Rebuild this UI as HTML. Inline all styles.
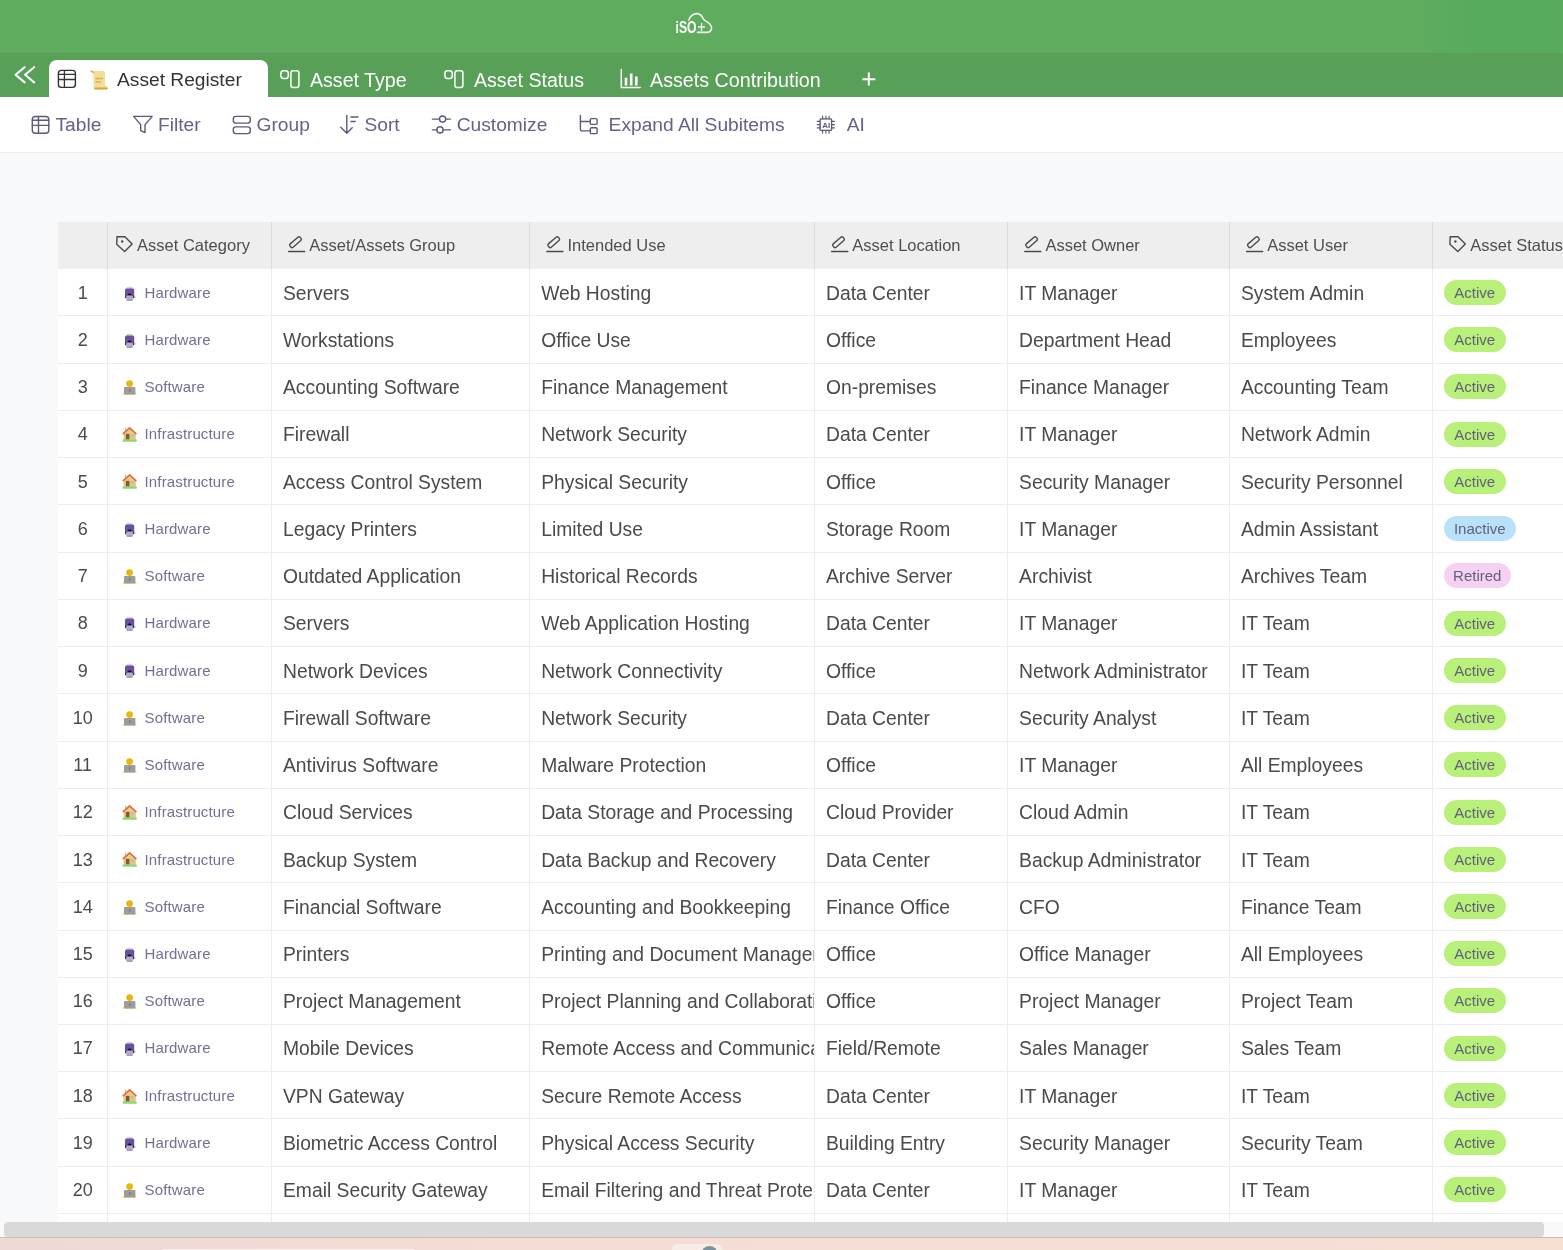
<!DOCTYPE html>
<html><head><meta charset="utf-8"><title>Asset Register</title>
<style>
*{box-sizing:border-box;margin:0;padding:0}
html,body{width:1563px;height:1250px;overflow:hidden;background:#f8f9fb;font-family:"Liberation Sans",sans-serif}
.a{position:absolute}
.t{position:absolute;white-space:nowrap}
svg{position:absolute;overflow:visible}
</style></head><body>
<div id="w" style="position:absolute;left:0;top:0;width:1563px;height:1250px;filter:blur(0.45px)">

<div class="a" style="left:0;top:0;width:1563px;height:53px;background:#5fac5f"></div>
<div class="a" style="left:1420px;top:0;width:143px;height:52px;background:linear-gradient(90deg,rgba(80,170,90,0) 0%,rgba(80,170,90,.55) 40%,rgba(80,170,90,.45) 100%)"></div>
<svg style="left:0;top:0" width="1563" height="53">
<text x="675.5" y="33" font-family="Liberation Sans" font-weight="bold" font-size="17" fill="#fff" textLength="21" lengthAdjust="spacingAndGlyphs">iSO</text>
<path d="M688.8 20 C690.5 15.5 693.5 13.6 697.2 13.6 C700.5 13.6 702.3 16.5 703.8 19.6 C705 21 707 21.5 708.5 22.8 C711 24.8 712 27 711.4 29.3 C710.8 31.3 709.2 32.4 707.2 32.4 L697.5 32.4" fill="none" stroke="#fff" stroke-width="1.6" opacity=".88" stroke-linecap="round"/>
<path d="M698 27 H705 M701.5 23 V31" stroke="#fff" stroke-width="1.3" opacity=".9"/>
</svg>
<div class="a" style="left:0;top:53px;width:1563px;height:44px;background:#58a058"></div>
<div class="a" style="left:49px;top:60.2px;width:219px;height:37px;background:#fff;border-radius:8px 8px 0 0"></div>
<svg style="left:0;top:0" width="60" height="97"><path d="M24.6 67.2 L15.6 74.8 L24.6 82.4 M34.1 67.2 L25.1 74.8 L34.1 82.4" fill="none" stroke="#fff" stroke-width="2.1" stroke-linecap="round" stroke-linejoin="round"/></svg>
<svg style="left:0;top:0" width="120" height="97"><rect x="58.4" y="70.4" width="17" height="17" rx="2.8" fill="none" stroke="#333" stroke-width="1.4"/><path d="M58.4 74.4 H75.4 M58.4 79.5 H75.4 M64.4 70.4 V87.4" stroke="#333" stroke-width="1.3"/></svg>
<svg style="left:0;top:0" width="120" height="97">
<path d="M92 73 Q90 71.5 91 71 L103 71 Q105 71 105 73 L105 85 L107.5 87 Q108 89 106 89.3 L95 89.3 Q93.5 89 93.5 87 L93.5 74.5 Z" fill="#f2de95"/>
<path d="M90.5 71.5 Q92.5 70.5 94 73" stroke="#d9b35a" stroke-width="1.4" fill="none"/>
<path d="M95.5 78.5 H103 M95.5 82 H101" stroke="#d8b45e" stroke-width="1.6"/>
<path d="M95 88.5 H107" stroke="#d6a640" stroke-width="1.8" stroke-linecap="round"/>
</svg>
<div class="t" style="left:117px;top:67px;font-size:19.2px;line-height:26px;color:#333">Asset Register</div>
<svg style="left:0;top:0" width="900" height="97">
<g fill="none" stroke="#fff" stroke-width="1.5">
<rect x="280.9" y="70.8" width="7.4" height="7.6" rx="2.6"/>
<rect x="290.9" y="70.8" width="8" height="16.6" rx="2.2"/>
<rect x="444.9" y="70.8" width="7.4" height="7.6" rx="2.6"/>
<rect x="454.9" y="70.8" width="8" height="16.6" rx="2.2"/>
<path d="M621.3 69.5 V87.4 H640.2" stroke-linecap="round"/>
<path d="M626 77.8 V85.6 M631.2 73.5 V85.6 M636.3 76.4 V85.6" stroke-width="2.6" stroke-linecap="butt"/>
<path d="M868.8 72.6 V85.6 M862.3 79.2 H875.3" stroke-width="2"/>
</g></svg>
<div class="t" style="left:310px;top:67px;font-size:19.6px;line-height:26px;color:#fff">Asset Type</div>
<div class="t" style="left:474px;top:67px;font-size:19.6px;line-height:26px;color:#fff">Asset Status</div>
<div class="t" style="left:650px;top:67px;font-size:19.7px;line-height:26px;color:#fff">Assets Contribution</div>
<div class="a" style="left:0;top:97px;width:1563px;height:56px;background:#fff;border-bottom:1.5px solid #ececec"></div>
<div class="t" style="left:55.5px;top:112.4px;font-size:19.2px;line-height:26px;color:#64628a">Table</div>
<div class="t" style="left:158px;top:112.4px;font-size:19.2px;line-height:26px;color:#64628a">Filter</div>
<div class="t" style="left:256.5px;top:112.4px;font-size:19.2px;line-height:26px;color:#64628a">Group</div>
<div class="t" style="left:364.5px;top:112.4px;font-size:19.2px;line-height:26px;color:#64628a">Sort</div>
<div class="t" style="left:456.7px;top:112.4px;font-size:19.2px;line-height:26px;color:#64628a">Customize</div>
<div class="t" style="left:608.6px;top:112.4px;font-size:19.2px;line-height:26px;color:#64628a">Expand All Subitems</div>
<div class="t" style="left:846.7px;top:112.4px;font-size:19.2px;line-height:26px;color:#64628a">AI</div>
<svg style="left:0;top:0" width="900" height="150"><g fill="none" stroke="#5c5a7a" stroke-width="1.4" stroke-linecap="round" stroke-linejoin="round">
<rect x="32.3" y="116.5" width="16.5" height="16.8" rx="3"/><path d="M32.3 120.3 H48.8 M32.3 125.4 H48.8 M38.5 116.5 V133.3"/>
<path d="M133.6 116.4 H152.2 L145 124.6 V132.6 L140.7 130.6 V124.6 Z"/>
<rect x="233.3" y="116.4" width="17" height="6.7" rx="2.5"/><rect x="233.3" y="126.9" width="17" height="6.7" rx="2.5"/>
<path d="M346.8 115.5 V133 M340.8 127.3 L346.8 133.3 L352.2 127.8 M351 117 H358 M351 121.5 H355.2"/>
<path d="M432.4 119.1 H439.4 M445.8 119.1 H450.4 M432.4 129.9 H436.8 M443.2 129.9 H450.4"/>
<circle cx="442.6" cy="119.1" r="3.1"/><circle cx="440" cy="129.9" r="3.1"/>
<path d="M580.4 115.5 V129 Q580.4 130.9 582.3 130.9 H590.3 M580.4 121.5 H590.3"/>
<rect x="590.3" y="118.6" width="6.8" height="5.8" rx="1.2"/><rect x="590.3" y="127.8" width="6.8" height="5.8" rx="1.2"/>
<rect x="820.1" y="118.9" width="11.5" height="11.5" rx="1"/>
<path d="M822.6 116 V118.9 M825.9 116 V118.9 M829.1 116 V118.9 M822.6 130.4 V133.3 M825.9 130.4 V133.3 M829.1 130.4 V133.3 M817.2 121.4 H820.1 M817.2 124.6 H820.1 M817.2 127.9 H820.1 M831.6 121.4 H834.5 M831.6 124.6 H834.5 M831.6 127.9 H834.5" stroke-width="1.1"/>
</g>
<text x="822.2" y="128.3" font-family="Liberation Sans" font-weight="bold" font-size="8" fill="#5c5a7a">AI</text>
</svg>
<div class="a" style="left:58.0px;top:222.0px;width:1505.0px;height:999.7px;background:#fff"></div>
<div class="a" style="left:58.0px;top:222.0px;width:1505.0px;height:46.7px;background:#eeeeee"></div>
<div class="a" style="left:107px;top:222.0px;width:1px;height:46.7px;background:#dadada"></div>
<div class="a" style="left:271px;top:222.0px;width:1px;height:46.7px;background:#dadada"></div>
<div class="a" style="left:529px;top:222.0px;width:1px;height:46.7px;background:#dadada"></div>
<div class="a" style="left:814px;top:222.0px;width:1px;height:46.7px;background:#dadada"></div>
<div class="a" style="left:1007px;top:222.0px;width:1px;height:46.7px;background:#dadada"></div>
<div class="a" style="left:1229px;top:222.0px;width:1px;height:46.7px;background:#dadada"></div>
<div class="a" style="left:1432px;top:222.0px;width:1px;height:46.7px;background:#dadada"></div>
<div class="a" style="left:107px;top:268.7px;width:1px;height:953.0px;background:#ededed"></div>
<div class="a" style="left:271px;top:268.7px;width:1px;height:953.0px;background:#ededed"></div>
<div class="a" style="left:529px;top:268.7px;width:1px;height:953.0px;background:#ededed"></div>
<div class="a" style="left:814px;top:268.7px;width:1px;height:953.0px;background:#ededed"></div>
<div class="a" style="left:1007px;top:268.7px;width:1px;height:953.0px;background:#ededed"></div>
<div class="a" style="left:1229px;top:268.7px;width:1px;height:953.0px;background:#ededed"></div>
<div class="a" style="left:1432px;top:268.7px;width:1px;height:953.0px;background:#ededed"></div>
<div class="a" style="left:58.0px;top:315px;width:1505.0px;height:1px;background:#ededed"></div>
<div class="a" style="left:58.0px;top:363px;width:1505.0px;height:1px;background:#ededed"></div>
<div class="a" style="left:58.0px;top:410px;width:1505.0px;height:1px;background:#ededed"></div>
<div class="a" style="left:58.0px;top:457px;width:1505.0px;height:1px;background:#ededed"></div>
<div class="a" style="left:58.0px;top:504px;width:1505.0px;height:1px;background:#ededed"></div>
<div class="a" style="left:58.0px;top:552px;width:1505.0px;height:1px;background:#ededed"></div>
<div class="a" style="left:58.0px;top:599px;width:1505.0px;height:1px;background:#ededed"></div>
<div class="a" style="left:58.0px;top:646px;width:1505.0px;height:1px;background:#ededed"></div>
<div class="a" style="left:58.0px;top:693px;width:1505.0px;height:1px;background:#ededed"></div>
<div class="a" style="left:58.0px;top:741px;width:1505.0px;height:1px;background:#ededed"></div>
<div class="a" style="left:58.0px;top:788px;width:1505.0px;height:1px;background:#ededed"></div>
<div class="a" style="left:58.0px;top:835px;width:1505.0px;height:1px;background:#ededed"></div>
<div class="a" style="left:58.0px;top:882px;width:1505.0px;height:1px;background:#ededed"></div>
<div class="a" style="left:58.0px;top:930px;width:1505.0px;height:1px;background:#ededed"></div>
<div class="a" style="left:58.0px;top:977px;width:1505.0px;height:1px;background:#ededed"></div>
<div class="a" style="left:58.0px;top:1024px;width:1505.0px;height:1px;background:#ededed"></div>
<div class="a" style="left:58.0px;top:1071px;width:1505.0px;height:1px;background:#ededed"></div>
<div class="a" style="left:58.0px;top:1118px;width:1505.0px;height:1px;background:#ededed"></div>
<div class="a" style="left:58.0px;top:1166px;width:1505.0px;height:1px;background:#ededed"></div>
<div class="a" style="left:58.0px;top:1213px;width:1505.0px;height:1px;background:#ededed"></div>
<div class="t" style="left:137.10px;top:231.5px;font-size:16.5px;line-height:26px;color:#4e4e4e">Asset Category</div>
<div class="t" style="left:309.30px;top:231.5px;font-size:16.5px;line-height:26px;color:#4e4e4e">Asset/Assets Group</div>
<div class="t" style="left:567.50px;top:231.5px;font-size:16.5px;line-height:26px;color:#4e4e4e">Intended Use</div>
<div class="t" style="left:852.30px;top:231.5px;font-size:16.5px;line-height:26px;color:#4e4e4e">Asset Location</div>
<div class="t" style="left:1045.40px;top:231.5px;font-size:16.5px;line-height:26px;color:#4e4e4e">Asset Owner</div>
<div class="t" style="left:1267.20px;top:231.5px;font-size:16.5px;line-height:26px;color:#4e4e4e">Asset User</div>
<div class="t" style="left:1470.30px;top:231.5px;font-size:16.5px;line-height:26px;color:#4e4e4e">Asset Status</div>
<svg style="left:0;top:0" width="1563" height="270"><g fill="none" stroke="#4a4a4a" stroke-width="1.4" stroke-linejoin="round" stroke-linecap="round"><path d="M117.00000000000001 236.7 H124.9 L132.10000000000002 243.9 L124.60000000000001 251.4 L116.70000000000002 244.2 Z"/><circle cx="122.20000000000002" cy="241.5" r="1.2" fill="#4a4a4a" stroke="none"/><rect x="288.80" y="240" width="13.4" height="4.4" rx="1.6" transform="rotate(-41 295.50 242.2)"/><path d="M288.70 251.4 H304.70" stroke-width="1.5"/><rect x="547.00" y="240" width="13.4" height="4.4" rx="1.6" transform="rotate(-41 553.70 242.2)"/><path d="M546.90 251.4 H562.90" stroke-width="1.5"/><rect x="831.80" y="240" width="13.4" height="4.4" rx="1.6" transform="rotate(-41 838.50 242.2)"/><path d="M831.70 251.4 H847.70" stroke-width="1.5"/><rect x="1024.90" y="240" width="13.4" height="4.4" rx="1.6" transform="rotate(-41 1031.60 242.2)"/><path d="M1024.80 251.4 H1040.80" stroke-width="1.5"/><rect x="1246.70" y="240" width="13.4" height="4.4" rx="1.6" transform="rotate(-41 1253.40 242.2)"/><path d="M1246.60 251.4 H1262.60" stroke-width="1.5"/><path d="M1450.2 236.7 H1458.1 L1465.3 243.9 L1457.8 251.4 L1449.9 244.2 Z"/><circle cx="1455.4" cy="241.5" r="1.2" fill="#4a4a4a" stroke="none"/></g></svg>
<div class="t" style="left:58.0px;top:268.70px;width:49.400000000000006px;text-align:center;font-size:18px;line-height:49.837px;color:#4a4a4a">1</div>
<svg style="left:122px;top:284.52px" width="16" height="17"><rect x="4.2" y="1.8" width="6.8" height="4" rx="1.6" fill="#d6d6d6"/><path d="M3 5.2 Q3 3.6 4.6 3.6 H10.6 Q12.2 3.6 12.2 5.2 V12.6 H3 Z" fill="#6a50a2"/><ellipse cx="7.6" cy="9.3" rx="2" ry="0.9" fill="#141414"/><rect x="3" y="10.6" width="1.4" height="2.6" fill="#3b2f5c"/><rect x="10.8" y="10.6" width="1.4" height="2.6" fill="#3b2f5c"/><rect x="4.2" y="10.8" width="6.8" height="4.2" rx="1.2" fill="#b3afbb"/><rect x="4.4" y="14" width="6.4" height="2" rx="1" fill="#a99fc6"/><rect x="12.4" y="11.2" width="1.2" height="1.4" fill="#e9a5e0"/></svg>
<div class="t" style="left:144.5px;top:268.70px;font-size:15px;letter-spacing:0.15px;line-height:47.837px;color:#727094">Hardware</div>
<div class="t" style="left:283.00px;top:268.70px;width:246.70px;overflow:hidden;font-size:19.3px;line-height:49.437000000000005px;color:#4a4a4a">Servers</div>
<div class="t" style="left:541.20px;top:268.70px;width:273.30px;overflow:hidden;font-size:19.3px;line-height:49.437000000000005px;color:#4a4a4a">Web Hosting</div>
<div class="t" style="left:826.00px;top:268.70px;width:181.60px;overflow:hidden;font-size:19.3px;line-height:49.437000000000005px;color:#4a4a4a">Data Center</div>
<div class="t" style="left:1019.10px;top:268.70px;width:210.30px;overflow:hidden;font-size:19.3px;line-height:49.437000000000005px;color:#4a4a4a">IT Manager</div>
<div class="t" style="left:1240.90px;top:268.70px;width:191.60px;overflow:hidden;font-size:19.3px;line-height:49.437000000000005px;color:#4a4a4a">System Admin</div>
<div class="t" style="left:1443.8px;top:279.92px;width:62px;height:25px;border-radius:12.5px;background:#b8f07a;text-align:center;font-size:15px;line-height:25.5px;color:#62607a">Active</div>
<div class="t" style="left:58.0px;top:315.94px;width:49.400000000000006px;text-align:center;font-size:18px;line-height:49.837px;color:#4a4a4a">2</div>
<svg style="left:122px;top:331.76px" width="16" height="17"><rect x="4.2" y="1.8" width="6.8" height="4" rx="1.6" fill="#d6d6d6"/><path d="M3 5.2 Q3 3.6 4.6 3.6 H10.6 Q12.2 3.6 12.2 5.2 V12.6 H3 Z" fill="#6a50a2"/><ellipse cx="7.6" cy="9.3" rx="2" ry="0.9" fill="#141414"/><rect x="3" y="10.6" width="1.4" height="2.6" fill="#3b2f5c"/><rect x="10.8" y="10.6" width="1.4" height="2.6" fill="#3b2f5c"/><rect x="4.2" y="10.8" width="6.8" height="4.2" rx="1.2" fill="#b3afbb"/><rect x="4.4" y="14" width="6.4" height="2" rx="1" fill="#a99fc6"/><rect x="12.4" y="11.2" width="1.2" height="1.4" fill="#e9a5e0"/></svg>
<div class="t" style="left:144.5px;top:315.94px;font-size:15px;letter-spacing:0.15px;line-height:47.837px;color:#727094">Hardware</div>
<div class="t" style="left:283.00px;top:315.94px;width:246.70px;overflow:hidden;font-size:19.3px;line-height:49.437000000000005px;color:#4a4a4a">Workstations</div>
<div class="t" style="left:541.20px;top:315.94px;width:273.30px;overflow:hidden;font-size:19.3px;line-height:49.437000000000005px;color:#4a4a4a">Office Use</div>
<div class="t" style="left:826.00px;top:315.94px;width:181.60px;overflow:hidden;font-size:19.3px;line-height:49.437000000000005px;color:#4a4a4a">Office</div>
<div class="t" style="left:1019.10px;top:315.94px;width:210.30px;overflow:hidden;font-size:19.3px;line-height:49.437000000000005px;color:#4a4a4a">Department Head</div>
<div class="t" style="left:1240.90px;top:315.94px;width:191.60px;overflow:hidden;font-size:19.3px;line-height:49.437000000000005px;color:#4a4a4a">Employees</div>
<div class="t" style="left:1443.8px;top:327.16px;width:62px;height:25px;border-radius:12.5px;background:#b8f07a;text-align:center;font-size:15px;line-height:25.5px;color:#62607a">Active</div>
<div class="t" style="left:58.0px;top:363.17px;width:49.400000000000006px;text-align:center;font-size:18px;line-height:49.837px;color:#4a4a4a">3</div>
<svg style="left:122px;top:378.99px" width="16" height="17"><circle cx="7.6" cy="4.6" r="3.4" fill="#e8b70c"/><path d="M0.4 15.8 Q1 13.6 2.5 13.6 H12.7 Q14.2 13.6 14.8 15.8 Z" fill="#f1df7c"/><rect x="2" y="8" width="11.4" height="7.4" rx="1" fill="#9c9c9c"/><rect x="7" y="10.2" width="1.3" height="2.6" fill="#7c6f94"/></svg>
<div class="t" style="left:144.5px;top:363.17px;font-size:15px;letter-spacing:0.15px;line-height:47.837px;color:#727094">Software</div>
<div class="t" style="left:283.00px;top:363.17px;width:246.70px;overflow:hidden;font-size:19.3px;line-height:49.437000000000005px;color:#4a4a4a">Accounting Software</div>
<div class="t" style="left:541.20px;top:363.17px;width:273.30px;overflow:hidden;font-size:19.3px;line-height:49.437000000000005px;color:#4a4a4a">Finance Management</div>
<div class="t" style="left:826.00px;top:363.17px;width:181.60px;overflow:hidden;font-size:19.3px;line-height:49.437000000000005px;color:#4a4a4a">On-premises</div>
<div class="t" style="left:1019.10px;top:363.17px;width:210.30px;overflow:hidden;font-size:19.3px;line-height:49.437000000000005px;color:#4a4a4a">Finance Manager</div>
<div class="t" style="left:1240.90px;top:363.17px;width:191.60px;overflow:hidden;font-size:19.3px;line-height:49.437000000000005px;color:#4a4a4a">Accounting Team</div>
<div class="t" style="left:1443.8px;top:374.39px;width:62px;height:25px;border-radius:12.5px;background:#b8f07a;text-align:center;font-size:15px;line-height:25.5px;color:#62607a">Active</div>
<div class="t" style="left:58.0px;top:410.41px;width:49.400000000000006px;text-align:center;font-size:18px;line-height:49.837px;color:#4a4a4a">4</div>
<svg style="left:122px;top:426.23px" width="16" height="17"><rect x="3" y="1.8" width="1.3" height="3.5" fill="#e4c060"/><rect x="1.6" y="7" width="12.2" height="7" fill="#ebc76c"/><path d="M7.6 2.2 L13 7.6 H2.2 Z" fill="#e8d274"/><path d="M0.8 8.2 L7.6 1.9 L14.4 8.2" fill="none" stroke="#e46652" stroke-width="1.6" stroke-linejoin="round"/><rect x="3.9" y="7.9" width="3.5" height="5.6" fill="#82573c"/><ellipse cx="10.3" cy="9.4" rx="1.7" ry="1.3" fill="#9cc2fa"/><rect x="0.6" y="13.4" width="14.2" height="2.3" rx="0.6" fill="#82d97e"/></svg>
<div class="t" style="left:144.5px;top:410.41px;font-size:15px;letter-spacing:0.15px;line-height:47.837px;color:#727094">Infrastructure</div>
<div class="t" style="left:283.00px;top:410.41px;width:246.70px;overflow:hidden;font-size:19.3px;line-height:49.437000000000005px;color:#4a4a4a">Firewall</div>
<div class="t" style="left:541.20px;top:410.41px;width:273.30px;overflow:hidden;font-size:19.3px;line-height:49.437000000000005px;color:#4a4a4a">Network Security</div>
<div class="t" style="left:826.00px;top:410.41px;width:181.60px;overflow:hidden;font-size:19.3px;line-height:49.437000000000005px;color:#4a4a4a">Data Center</div>
<div class="t" style="left:1019.10px;top:410.41px;width:210.30px;overflow:hidden;font-size:19.3px;line-height:49.437000000000005px;color:#4a4a4a">IT Manager</div>
<div class="t" style="left:1240.90px;top:410.41px;width:191.60px;overflow:hidden;font-size:19.3px;line-height:49.437000000000005px;color:#4a4a4a">Network Admin</div>
<div class="t" style="left:1443.8px;top:421.63px;width:62px;height:25px;border-radius:12.5px;background:#b8f07a;text-align:center;font-size:15px;line-height:25.5px;color:#62607a">Active</div>
<div class="t" style="left:58.0px;top:457.65px;width:49.400000000000006px;text-align:center;font-size:18px;line-height:49.837px;color:#4a4a4a">5</div>
<svg style="left:122px;top:473.47px" width="16" height="17"><rect x="3" y="1.8" width="1.3" height="3.5" fill="#e4c060"/><rect x="1.6" y="7" width="12.2" height="7" fill="#ebc76c"/><path d="M7.6 2.2 L13 7.6 H2.2 Z" fill="#e8d274"/><path d="M0.8 8.2 L7.6 1.9 L14.4 8.2" fill="none" stroke="#e46652" stroke-width="1.6" stroke-linejoin="round"/><rect x="3.9" y="7.9" width="3.5" height="5.6" fill="#82573c"/><ellipse cx="10.3" cy="9.4" rx="1.7" ry="1.3" fill="#9cc2fa"/><rect x="0.6" y="13.4" width="14.2" height="2.3" rx="0.6" fill="#82d97e"/></svg>
<div class="t" style="left:144.5px;top:457.65px;font-size:15px;letter-spacing:0.15px;line-height:47.837px;color:#727094">Infrastructure</div>
<div class="t" style="left:283.00px;top:457.65px;width:246.70px;overflow:hidden;font-size:19.3px;line-height:49.437000000000005px;color:#4a4a4a">Access Control System</div>
<div class="t" style="left:541.20px;top:457.65px;width:273.30px;overflow:hidden;font-size:19.3px;line-height:49.437000000000005px;color:#4a4a4a">Physical Security</div>
<div class="t" style="left:826.00px;top:457.65px;width:181.60px;overflow:hidden;font-size:19.3px;line-height:49.437000000000005px;color:#4a4a4a">Office</div>
<div class="t" style="left:1019.10px;top:457.65px;width:210.30px;overflow:hidden;font-size:19.3px;line-height:49.437000000000005px;color:#4a4a4a">Security Manager</div>
<div class="t" style="left:1240.90px;top:457.65px;width:191.60px;overflow:hidden;font-size:19.3px;line-height:49.437000000000005px;color:#4a4a4a">Security Personnel</div>
<div class="t" style="left:1443.8px;top:468.87px;width:62px;height:25px;border-radius:12.5px;background:#b8f07a;text-align:center;font-size:15px;line-height:25.5px;color:#62607a">Active</div>
<div class="t" style="left:58.0px;top:504.88px;width:49.400000000000006px;text-align:center;font-size:18px;line-height:49.837px;color:#4a4a4a">6</div>
<svg style="left:122px;top:520.7px" width="16" height="17"><rect x="4.2" y="1.8" width="6.8" height="4" rx="1.6" fill="#d6d6d6"/><path d="M3 5.2 Q3 3.6 4.6 3.6 H10.6 Q12.2 3.6 12.2 5.2 V12.6 H3 Z" fill="#6a50a2"/><ellipse cx="7.6" cy="9.3" rx="2" ry="0.9" fill="#141414"/><rect x="3" y="10.6" width="1.4" height="2.6" fill="#3b2f5c"/><rect x="10.8" y="10.6" width="1.4" height="2.6" fill="#3b2f5c"/><rect x="4.2" y="10.8" width="6.8" height="4.2" rx="1.2" fill="#b3afbb"/><rect x="4.4" y="14" width="6.4" height="2" rx="1" fill="#a99fc6"/><rect x="12.4" y="11.2" width="1.2" height="1.4" fill="#e9a5e0"/></svg>
<div class="t" style="left:144.5px;top:504.88px;font-size:15px;letter-spacing:0.15px;line-height:47.837px;color:#727094">Hardware</div>
<div class="t" style="left:283.00px;top:504.88px;width:246.70px;overflow:hidden;font-size:19.3px;line-height:49.437000000000005px;color:#4a4a4a">Legacy Printers</div>
<div class="t" style="left:541.20px;top:504.88px;width:273.30px;overflow:hidden;font-size:19.3px;line-height:49.437000000000005px;color:#4a4a4a">Limited Use</div>
<div class="t" style="left:826.00px;top:504.88px;width:181.60px;overflow:hidden;font-size:19.3px;line-height:49.437000000000005px;color:#4a4a4a">Storage Room</div>
<div class="t" style="left:1019.10px;top:504.88px;width:210.30px;overflow:hidden;font-size:19.3px;line-height:49.437000000000005px;color:#4a4a4a">IT Manager</div>
<div class="t" style="left:1240.90px;top:504.88px;width:191.60px;overflow:hidden;font-size:19.3px;line-height:49.437000000000005px;color:#4a4a4a">Admin Assistant</div>
<div class="t" style="left:1443.8px;top:516.10px;width:72px;height:25px;border-radius:12.5px;background:#b9e1fa;text-align:center;font-size:15px;line-height:25.5px;color:#62607a">Inactive</div>
<div class="t" style="left:58.0px;top:552.12px;width:49.400000000000006px;text-align:center;font-size:18px;line-height:49.837px;color:#4a4a4a">7</div>
<svg style="left:122px;top:567.94px" width="16" height="17"><circle cx="7.6" cy="4.6" r="3.4" fill="#e8b70c"/><path d="M0.4 15.8 Q1 13.6 2.5 13.6 H12.7 Q14.2 13.6 14.8 15.8 Z" fill="#f1df7c"/><rect x="2" y="8" width="11.4" height="7.4" rx="1" fill="#9c9c9c"/><rect x="7" y="10.2" width="1.3" height="2.6" fill="#7c6f94"/></svg>
<div class="t" style="left:144.5px;top:552.12px;font-size:15px;letter-spacing:0.15px;line-height:47.837px;color:#727094">Software</div>
<div class="t" style="left:283.00px;top:552.12px;width:246.70px;overflow:hidden;font-size:19.3px;line-height:49.437000000000005px;color:#4a4a4a">Outdated Application</div>
<div class="t" style="left:541.20px;top:552.12px;width:273.30px;overflow:hidden;font-size:19.3px;line-height:49.437000000000005px;color:#4a4a4a">Historical Records</div>
<div class="t" style="left:826.00px;top:552.12px;width:181.60px;overflow:hidden;font-size:19.3px;line-height:49.437000000000005px;color:#4a4a4a">Archive Server</div>
<div class="t" style="left:1019.10px;top:552.12px;width:210.30px;overflow:hidden;font-size:19.3px;line-height:49.437000000000005px;color:#4a4a4a">Archivist</div>
<div class="t" style="left:1240.90px;top:552.12px;width:191.60px;overflow:hidden;font-size:19.3px;line-height:49.437000000000005px;color:#4a4a4a">Archives Team</div>
<div class="t" style="left:1443.8px;top:563.34px;width:67px;height:25px;border-radius:12.5px;background:#f6d1f3;text-align:center;font-size:15px;line-height:25.5px;color:#62607a">Retired</div>
<div class="t" style="left:58.0px;top:599.36px;width:49.400000000000006px;text-align:center;font-size:18px;line-height:49.837px;color:#4a4a4a">8</div>
<svg style="left:122px;top:615.18px" width="16" height="17"><rect x="4.2" y="1.8" width="6.8" height="4" rx="1.6" fill="#d6d6d6"/><path d="M3 5.2 Q3 3.6 4.6 3.6 H10.6 Q12.2 3.6 12.2 5.2 V12.6 H3 Z" fill="#6a50a2"/><ellipse cx="7.6" cy="9.3" rx="2" ry="0.9" fill="#141414"/><rect x="3" y="10.6" width="1.4" height="2.6" fill="#3b2f5c"/><rect x="10.8" y="10.6" width="1.4" height="2.6" fill="#3b2f5c"/><rect x="4.2" y="10.8" width="6.8" height="4.2" rx="1.2" fill="#b3afbb"/><rect x="4.4" y="14" width="6.4" height="2" rx="1" fill="#a99fc6"/><rect x="12.4" y="11.2" width="1.2" height="1.4" fill="#e9a5e0"/></svg>
<div class="t" style="left:144.5px;top:599.36px;font-size:15px;letter-spacing:0.15px;line-height:47.837px;color:#727094">Hardware</div>
<div class="t" style="left:283.00px;top:599.36px;width:246.70px;overflow:hidden;font-size:19.3px;line-height:49.437000000000005px;color:#4a4a4a">Servers</div>
<div class="t" style="left:541.20px;top:599.36px;width:273.30px;overflow:hidden;font-size:19.3px;line-height:49.437000000000005px;color:#4a4a4a">Web Application Hosting</div>
<div class="t" style="left:826.00px;top:599.36px;width:181.60px;overflow:hidden;font-size:19.3px;line-height:49.437000000000005px;color:#4a4a4a">Data Center</div>
<div class="t" style="left:1019.10px;top:599.36px;width:210.30px;overflow:hidden;font-size:19.3px;line-height:49.437000000000005px;color:#4a4a4a">IT Manager</div>
<div class="t" style="left:1240.90px;top:599.36px;width:191.60px;overflow:hidden;font-size:19.3px;line-height:49.437000000000005px;color:#4a4a4a">IT Team</div>
<div class="t" style="left:1443.8px;top:610.58px;width:62px;height:25px;border-radius:12.5px;background:#b8f07a;text-align:center;font-size:15px;line-height:25.5px;color:#62607a">Active</div>
<div class="t" style="left:58.0px;top:646.60px;width:49.400000000000006px;text-align:center;font-size:18px;line-height:49.837px;color:#4a4a4a">9</div>
<svg style="left:122px;top:662.41px" width="16" height="17"><rect x="4.2" y="1.8" width="6.8" height="4" rx="1.6" fill="#d6d6d6"/><path d="M3 5.2 Q3 3.6 4.6 3.6 H10.6 Q12.2 3.6 12.2 5.2 V12.6 H3 Z" fill="#6a50a2"/><ellipse cx="7.6" cy="9.3" rx="2" ry="0.9" fill="#141414"/><rect x="3" y="10.6" width="1.4" height="2.6" fill="#3b2f5c"/><rect x="10.8" y="10.6" width="1.4" height="2.6" fill="#3b2f5c"/><rect x="4.2" y="10.8" width="6.8" height="4.2" rx="1.2" fill="#b3afbb"/><rect x="4.4" y="14" width="6.4" height="2" rx="1" fill="#a99fc6"/><rect x="12.4" y="11.2" width="1.2" height="1.4" fill="#e9a5e0"/></svg>
<div class="t" style="left:144.5px;top:646.60px;font-size:15px;letter-spacing:0.15px;line-height:47.837px;color:#727094">Hardware</div>
<div class="t" style="left:283.00px;top:646.60px;width:246.70px;overflow:hidden;font-size:19.3px;line-height:49.437000000000005px;color:#4a4a4a">Network Devices</div>
<div class="t" style="left:541.20px;top:646.60px;width:273.30px;overflow:hidden;font-size:19.3px;line-height:49.437000000000005px;color:#4a4a4a">Network Connectivity</div>
<div class="t" style="left:826.00px;top:646.60px;width:181.60px;overflow:hidden;font-size:19.3px;line-height:49.437000000000005px;color:#4a4a4a">Office</div>
<div class="t" style="left:1019.10px;top:646.60px;width:210.30px;overflow:hidden;font-size:19.3px;line-height:49.437000000000005px;color:#4a4a4a">Network Administrator</div>
<div class="t" style="left:1240.90px;top:646.60px;width:191.60px;overflow:hidden;font-size:19.3px;line-height:49.437000000000005px;color:#4a4a4a">IT Team</div>
<div class="t" style="left:1443.8px;top:657.81px;width:62px;height:25px;border-radius:12.5px;background:#b8f07a;text-align:center;font-size:15px;line-height:25.5px;color:#62607a">Active</div>
<div class="t" style="left:58.0px;top:693.83px;width:49.400000000000006px;text-align:center;font-size:18px;line-height:49.837px;color:#4a4a4a">10</div>
<svg style="left:122px;top:709.65px" width="16" height="17"><circle cx="7.6" cy="4.6" r="3.4" fill="#e8b70c"/><path d="M0.4 15.8 Q1 13.6 2.5 13.6 H12.7 Q14.2 13.6 14.8 15.8 Z" fill="#f1df7c"/><rect x="2" y="8" width="11.4" height="7.4" rx="1" fill="#9c9c9c"/><rect x="7" y="10.2" width="1.3" height="2.6" fill="#7c6f94"/></svg>
<div class="t" style="left:144.5px;top:693.83px;font-size:15px;letter-spacing:0.15px;line-height:47.837px;color:#727094">Software</div>
<div class="t" style="left:283.00px;top:693.83px;width:246.70px;overflow:hidden;font-size:19.3px;line-height:49.437000000000005px;color:#4a4a4a">Firewall Software</div>
<div class="t" style="left:541.20px;top:693.83px;width:273.30px;overflow:hidden;font-size:19.3px;line-height:49.437000000000005px;color:#4a4a4a">Network Security</div>
<div class="t" style="left:826.00px;top:693.83px;width:181.60px;overflow:hidden;font-size:19.3px;line-height:49.437000000000005px;color:#4a4a4a">Data Center</div>
<div class="t" style="left:1019.10px;top:693.83px;width:210.30px;overflow:hidden;font-size:19.3px;line-height:49.437000000000005px;color:#4a4a4a">Security Analyst</div>
<div class="t" style="left:1240.90px;top:693.83px;width:191.60px;overflow:hidden;font-size:19.3px;line-height:49.437000000000005px;color:#4a4a4a">IT Team</div>
<div class="t" style="left:1443.8px;top:705.05px;width:62px;height:25px;border-radius:12.5px;background:#b8f07a;text-align:center;font-size:15px;line-height:25.5px;color:#62607a">Active</div>
<div class="t" style="left:58.0px;top:741.07px;width:49.400000000000006px;text-align:center;font-size:18px;line-height:49.837px;color:#4a4a4a">11</div>
<svg style="left:122px;top:756.89px" width="16" height="17"><circle cx="7.6" cy="4.6" r="3.4" fill="#e8b70c"/><path d="M0.4 15.8 Q1 13.6 2.5 13.6 H12.7 Q14.2 13.6 14.8 15.8 Z" fill="#f1df7c"/><rect x="2" y="8" width="11.4" height="7.4" rx="1" fill="#9c9c9c"/><rect x="7" y="10.2" width="1.3" height="2.6" fill="#7c6f94"/></svg>
<div class="t" style="left:144.5px;top:741.07px;font-size:15px;letter-spacing:0.15px;line-height:47.837px;color:#727094">Software</div>
<div class="t" style="left:283.00px;top:741.07px;width:246.70px;overflow:hidden;font-size:19.3px;line-height:49.437000000000005px;color:#4a4a4a">Antivirus Software</div>
<div class="t" style="left:541.20px;top:741.07px;width:273.30px;overflow:hidden;font-size:19.3px;line-height:49.437000000000005px;color:#4a4a4a">Malware Protection</div>
<div class="t" style="left:826.00px;top:741.07px;width:181.60px;overflow:hidden;font-size:19.3px;line-height:49.437000000000005px;color:#4a4a4a">Office</div>
<div class="t" style="left:1019.10px;top:741.07px;width:210.30px;overflow:hidden;font-size:19.3px;line-height:49.437000000000005px;color:#4a4a4a">IT Manager</div>
<div class="t" style="left:1240.90px;top:741.07px;width:191.60px;overflow:hidden;font-size:19.3px;line-height:49.437000000000005px;color:#4a4a4a">All Employees</div>
<div class="t" style="left:1443.8px;top:752.29px;width:62px;height:25px;border-radius:12.5px;background:#b8f07a;text-align:center;font-size:15px;line-height:25.5px;color:#62607a">Active</div>
<div class="t" style="left:58.0px;top:788.31px;width:49.400000000000006px;text-align:center;font-size:18px;line-height:49.837px;color:#4a4a4a">12</div>
<svg style="left:122px;top:804.13px" width="16" height="17"><rect x="3" y="1.8" width="1.3" height="3.5" fill="#e4c060"/><rect x="1.6" y="7" width="12.2" height="7" fill="#ebc76c"/><path d="M7.6 2.2 L13 7.6 H2.2 Z" fill="#e8d274"/><path d="M0.8 8.2 L7.6 1.9 L14.4 8.2" fill="none" stroke="#e46652" stroke-width="1.6" stroke-linejoin="round"/><rect x="3.9" y="7.9" width="3.5" height="5.6" fill="#82573c"/><ellipse cx="10.3" cy="9.4" rx="1.7" ry="1.3" fill="#9cc2fa"/><rect x="0.6" y="13.4" width="14.2" height="2.3" rx="0.6" fill="#82d97e"/></svg>
<div class="t" style="left:144.5px;top:788.31px;font-size:15px;letter-spacing:0.15px;line-height:47.837px;color:#727094">Infrastructure</div>
<div class="t" style="left:283.00px;top:788.31px;width:246.70px;overflow:hidden;font-size:19.3px;line-height:49.437000000000005px;color:#4a4a4a">Cloud Services</div>
<div class="t" style="left:541.20px;top:788.31px;width:273.30px;overflow:hidden;font-size:19.3px;line-height:49.437000000000005px;color:#4a4a4a">Data Storage and Processing</div>
<div class="t" style="left:826.00px;top:788.31px;width:181.60px;overflow:hidden;font-size:19.3px;line-height:49.437000000000005px;color:#4a4a4a">Cloud Provider</div>
<div class="t" style="left:1019.10px;top:788.31px;width:210.30px;overflow:hidden;font-size:19.3px;line-height:49.437000000000005px;color:#4a4a4a">Cloud Admin</div>
<div class="t" style="left:1240.90px;top:788.31px;width:191.60px;overflow:hidden;font-size:19.3px;line-height:49.437000000000005px;color:#4a4a4a">IT Team</div>
<div class="t" style="left:1443.8px;top:799.53px;width:62px;height:25px;border-radius:12.5px;background:#b8f07a;text-align:center;font-size:15px;line-height:25.5px;color:#62607a">Active</div>
<div class="t" style="left:58.0px;top:835.54px;width:49.400000000000006px;text-align:center;font-size:18px;line-height:49.837px;color:#4a4a4a">13</div>
<svg style="left:122px;top:851.36px" width="16" height="17"><rect x="3" y="1.8" width="1.3" height="3.5" fill="#e4c060"/><rect x="1.6" y="7" width="12.2" height="7" fill="#ebc76c"/><path d="M7.6 2.2 L13 7.6 H2.2 Z" fill="#e8d274"/><path d="M0.8 8.2 L7.6 1.9 L14.4 8.2" fill="none" stroke="#e46652" stroke-width="1.6" stroke-linejoin="round"/><rect x="3.9" y="7.9" width="3.5" height="5.6" fill="#82573c"/><ellipse cx="10.3" cy="9.4" rx="1.7" ry="1.3" fill="#9cc2fa"/><rect x="0.6" y="13.4" width="14.2" height="2.3" rx="0.6" fill="#82d97e"/></svg>
<div class="t" style="left:144.5px;top:835.54px;font-size:15px;letter-spacing:0.15px;line-height:47.837px;color:#727094">Infrastructure</div>
<div class="t" style="left:283.00px;top:835.54px;width:246.70px;overflow:hidden;font-size:19.3px;line-height:49.437000000000005px;color:#4a4a4a">Backup System</div>
<div class="t" style="left:541.20px;top:835.54px;width:273.30px;overflow:hidden;font-size:19.3px;line-height:49.437000000000005px;color:#4a4a4a">Data Backup and Recovery</div>
<div class="t" style="left:826.00px;top:835.54px;width:181.60px;overflow:hidden;font-size:19.3px;line-height:49.437000000000005px;color:#4a4a4a">Data Center</div>
<div class="t" style="left:1019.10px;top:835.54px;width:210.30px;overflow:hidden;font-size:19.3px;line-height:49.437000000000005px;color:#4a4a4a">Backup Administrator</div>
<div class="t" style="left:1240.90px;top:835.54px;width:191.60px;overflow:hidden;font-size:19.3px;line-height:49.437000000000005px;color:#4a4a4a">IT Team</div>
<div class="t" style="left:1443.8px;top:846.76px;width:62px;height:25px;border-radius:12.5px;background:#b8f07a;text-align:center;font-size:15px;line-height:25.5px;color:#62607a">Active</div>
<div class="t" style="left:58.0px;top:882.78px;width:49.400000000000006px;text-align:center;font-size:18px;line-height:49.837px;color:#4a4a4a">14</div>
<svg style="left:122px;top:898.6px" width="16" height="17"><circle cx="7.6" cy="4.6" r="3.4" fill="#e8b70c"/><path d="M0.4 15.8 Q1 13.6 2.5 13.6 H12.7 Q14.2 13.6 14.8 15.8 Z" fill="#f1df7c"/><rect x="2" y="8" width="11.4" height="7.4" rx="1" fill="#9c9c9c"/><rect x="7" y="10.2" width="1.3" height="2.6" fill="#7c6f94"/></svg>
<div class="t" style="left:144.5px;top:882.78px;font-size:15px;letter-spacing:0.15px;line-height:47.837px;color:#727094">Software</div>
<div class="t" style="left:283.00px;top:882.78px;width:246.70px;overflow:hidden;font-size:19.3px;line-height:49.437000000000005px;color:#4a4a4a">Financial Software</div>
<div class="t" style="left:541.20px;top:882.78px;width:273.30px;overflow:hidden;font-size:19.3px;line-height:49.437000000000005px;color:#4a4a4a">Accounting and Bookkeeping</div>
<div class="t" style="left:826.00px;top:882.78px;width:181.60px;overflow:hidden;font-size:19.3px;line-height:49.437000000000005px;color:#4a4a4a">Finance Office</div>
<div class="t" style="left:1019.10px;top:882.78px;width:210.30px;overflow:hidden;font-size:19.3px;line-height:49.437000000000005px;color:#4a4a4a">CFO</div>
<div class="t" style="left:1240.90px;top:882.78px;width:191.60px;overflow:hidden;font-size:19.3px;line-height:49.437000000000005px;color:#4a4a4a">Finance Team</div>
<div class="t" style="left:1443.8px;top:894.00px;width:62px;height:25px;border-radius:12.5px;background:#b8f07a;text-align:center;font-size:15px;line-height:25.5px;color:#62607a">Active</div>
<div class="t" style="left:58.0px;top:930.02px;width:49.400000000000006px;text-align:center;font-size:18px;line-height:49.837px;color:#4a4a4a">15</div>
<svg style="left:122px;top:945.84px" width="16" height="17"><rect x="4.2" y="1.8" width="6.8" height="4" rx="1.6" fill="#d6d6d6"/><path d="M3 5.2 Q3 3.6 4.6 3.6 H10.6 Q12.2 3.6 12.2 5.2 V12.6 H3 Z" fill="#6a50a2"/><ellipse cx="7.6" cy="9.3" rx="2" ry="0.9" fill="#141414"/><rect x="3" y="10.6" width="1.4" height="2.6" fill="#3b2f5c"/><rect x="10.8" y="10.6" width="1.4" height="2.6" fill="#3b2f5c"/><rect x="4.2" y="10.8" width="6.8" height="4.2" rx="1.2" fill="#b3afbb"/><rect x="4.4" y="14" width="6.4" height="2" rx="1" fill="#a99fc6"/><rect x="12.4" y="11.2" width="1.2" height="1.4" fill="#e9a5e0"/></svg>
<div class="t" style="left:144.5px;top:930.02px;font-size:15px;letter-spacing:0.15px;line-height:47.837px;color:#727094">Hardware</div>
<div class="t" style="left:283.00px;top:930.02px;width:246.70px;overflow:hidden;font-size:19.3px;line-height:49.437000000000005px;color:#4a4a4a">Printers</div>
<div class="t" style="left:541.20px;top:930.02px;width:273.30px;overflow:hidden;font-size:19.3px;line-height:49.437000000000005px;color:#4a4a4a">Printing and Document Management</div>
<div class="t" style="left:826.00px;top:930.02px;width:181.60px;overflow:hidden;font-size:19.3px;line-height:49.437000000000005px;color:#4a4a4a">Office</div>
<div class="t" style="left:1019.10px;top:930.02px;width:210.30px;overflow:hidden;font-size:19.3px;line-height:49.437000000000005px;color:#4a4a4a">Office Manager</div>
<div class="t" style="left:1240.90px;top:930.02px;width:191.60px;overflow:hidden;font-size:19.3px;line-height:49.437000000000005px;color:#4a4a4a">All Employees</div>
<div class="t" style="left:1443.8px;top:941.24px;width:62px;height:25px;border-radius:12.5px;background:#b8f07a;text-align:center;font-size:15px;line-height:25.5px;color:#62607a">Active</div>
<div class="t" style="left:58.0px;top:977.26px;width:49.400000000000006px;text-align:center;font-size:18px;line-height:49.837px;color:#4a4a4a">16</div>
<svg style="left:122px;top:993.07px" width="16" height="17"><circle cx="7.6" cy="4.6" r="3.4" fill="#e8b70c"/><path d="M0.4 15.8 Q1 13.6 2.5 13.6 H12.7 Q14.2 13.6 14.8 15.8 Z" fill="#f1df7c"/><rect x="2" y="8" width="11.4" height="7.4" rx="1" fill="#9c9c9c"/><rect x="7" y="10.2" width="1.3" height="2.6" fill="#7c6f94"/></svg>
<div class="t" style="left:144.5px;top:977.26px;font-size:15px;letter-spacing:0.15px;line-height:47.837px;color:#727094">Software</div>
<div class="t" style="left:283.00px;top:977.26px;width:246.70px;overflow:hidden;font-size:19.3px;line-height:49.437000000000005px;color:#4a4a4a">Project Management</div>
<div class="t" style="left:541.20px;top:977.26px;width:273.30px;overflow:hidden;font-size:19.3px;line-height:49.437000000000005px;color:#4a4a4a">Project Planning and Collaboration</div>
<div class="t" style="left:826.00px;top:977.26px;width:181.60px;overflow:hidden;font-size:19.3px;line-height:49.437000000000005px;color:#4a4a4a">Office</div>
<div class="t" style="left:1019.10px;top:977.26px;width:210.30px;overflow:hidden;font-size:19.3px;line-height:49.437000000000005px;color:#4a4a4a">Project Manager</div>
<div class="t" style="left:1240.90px;top:977.26px;width:191.60px;overflow:hidden;font-size:19.3px;line-height:49.437000000000005px;color:#4a4a4a">Project Team</div>
<div class="t" style="left:1443.8px;top:988.47px;width:62px;height:25px;border-radius:12.5px;background:#b8f07a;text-align:center;font-size:15px;line-height:25.5px;color:#62607a">Active</div>
<div class="t" style="left:58.0px;top:1024.49px;width:49.400000000000006px;text-align:center;font-size:18px;line-height:49.837px;color:#4a4a4a">17</div>
<svg style="left:122px;top:1040.31px" width="16" height="17"><rect x="4.2" y="1.8" width="6.8" height="4" rx="1.6" fill="#d6d6d6"/><path d="M3 5.2 Q3 3.6 4.6 3.6 H10.6 Q12.2 3.6 12.2 5.2 V12.6 H3 Z" fill="#6a50a2"/><ellipse cx="7.6" cy="9.3" rx="2" ry="0.9" fill="#141414"/><rect x="3" y="10.6" width="1.4" height="2.6" fill="#3b2f5c"/><rect x="10.8" y="10.6" width="1.4" height="2.6" fill="#3b2f5c"/><rect x="4.2" y="10.8" width="6.8" height="4.2" rx="1.2" fill="#b3afbb"/><rect x="4.4" y="14" width="6.4" height="2" rx="1" fill="#a99fc6"/><rect x="12.4" y="11.2" width="1.2" height="1.4" fill="#e9a5e0"/></svg>
<div class="t" style="left:144.5px;top:1024.49px;font-size:15px;letter-spacing:0.15px;line-height:47.837px;color:#727094">Hardware</div>
<div class="t" style="left:283.00px;top:1024.49px;width:246.70px;overflow:hidden;font-size:19.3px;line-height:49.437000000000005px;color:#4a4a4a">Mobile Devices</div>
<div class="t" style="left:541.20px;top:1024.49px;width:273.30px;overflow:hidden;font-size:19.3px;line-height:49.437000000000005px;color:#4a4a4a">Remote Access and Communication</div>
<div class="t" style="left:826.00px;top:1024.49px;width:181.60px;overflow:hidden;font-size:19.3px;line-height:49.437000000000005px;color:#4a4a4a">Field/Remote</div>
<div class="t" style="left:1019.10px;top:1024.49px;width:210.30px;overflow:hidden;font-size:19.3px;line-height:49.437000000000005px;color:#4a4a4a">Sales Manager</div>
<div class="t" style="left:1240.90px;top:1024.49px;width:191.60px;overflow:hidden;font-size:19.3px;line-height:49.437000000000005px;color:#4a4a4a">Sales Team</div>
<div class="t" style="left:1443.8px;top:1035.71px;width:62px;height:25px;border-radius:12.5px;background:#b8f07a;text-align:center;font-size:15px;line-height:25.5px;color:#62607a">Active</div>
<div class="t" style="left:58.0px;top:1071.73px;width:49.400000000000006px;text-align:center;font-size:18px;line-height:49.837px;color:#4a4a4a">18</div>
<svg style="left:122px;top:1087.55px" width="16" height="17"><rect x="3" y="1.8" width="1.3" height="3.5" fill="#e4c060"/><rect x="1.6" y="7" width="12.2" height="7" fill="#ebc76c"/><path d="M7.6 2.2 L13 7.6 H2.2 Z" fill="#e8d274"/><path d="M0.8 8.2 L7.6 1.9 L14.4 8.2" fill="none" stroke="#e46652" stroke-width="1.6" stroke-linejoin="round"/><rect x="3.9" y="7.9" width="3.5" height="5.6" fill="#82573c"/><ellipse cx="10.3" cy="9.4" rx="1.7" ry="1.3" fill="#9cc2fa"/><rect x="0.6" y="13.4" width="14.2" height="2.3" rx="0.6" fill="#82d97e"/></svg>
<div class="t" style="left:144.5px;top:1071.73px;font-size:15px;letter-spacing:0.15px;line-height:47.837px;color:#727094">Infrastructure</div>
<div class="t" style="left:283.00px;top:1071.73px;width:246.70px;overflow:hidden;font-size:19.3px;line-height:49.437000000000005px;color:#4a4a4a">VPN Gateway</div>
<div class="t" style="left:541.20px;top:1071.73px;width:273.30px;overflow:hidden;font-size:19.3px;line-height:49.437000000000005px;color:#4a4a4a">Secure Remote Access</div>
<div class="t" style="left:826.00px;top:1071.73px;width:181.60px;overflow:hidden;font-size:19.3px;line-height:49.437000000000005px;color:#4a4a4a">Data Center</div>
<div class="t" style="left:1019.10px;top:1071.73px;width:210.30px;overflow:hidden;font-size:19.3px;line-height:49.437000000000005px;color:#4a4a4a">IT Manager</div>
<div class="t" style="left:1240.90px;top:1071.73px;width:191.60px;overflow:hidden;font-size:19.3px;line-height:49.437000000000005px;color:#4a4a4a">IT Team</div>
<div class="t" style="left:1443.8px;top:1082.95px;width:62px;height:25px;border-radius:12.5px;background:#b8f07a;text-align:center;font-size:15px;line-height:25.5px;color:#62607a">Active</div>
<div class="t" style="left:58.0px;top:1118.97px;width:49.400000000000006px;text-align:center;font-size:18px;line-height:49.837px;color:#4a4a4a">19</div>
<svg style="left:122px;top:1134.78px" width="16" height="17"><rect x="4.2" y="1.8" width="6.8" height="4" rx="1.6" fill="#d6d6d6"/><path d="M3 5.2 Q3 3.6 4.6 3.6 H10.6 Q12.2 3.6 12.2 5.2 V12.6 H3 Z" fill="#6a50a2"/><ellipse cx="7.6" cy="9.3" rx="2" ry="0.9" fill="#141414"/><rect x="3" y="10.6" width="1.4" height="2.6" fill="#3b2f5c"/><rect x="10.8" y="10.6" width="1.4" height="2.6" fill="#3b2f5c"/><rect x="4.2" y="10.8" width="6.8" height="4.2" rx="1.2" fill="#b3afbb"/><rect x="4.4" y="14" width="6.4" height="2" rx="1" fill="#a99fc6"/><rect x="12.4" y="11.2" width="1.2" height="1.4" fill="#e9a5e0"/></svg>
<div class="t" style="left:144.5px;top:1118.97px;font-size:15px;letter-spacing:0.15px;line-height:47.837px;color:#727094">Hardware</div>
<div class="t" style="left:283.00px;top:1118.97px;width:246.70px;overflow:hidden;font-size:19.3px;line-height:49.437000000000005px;color:#4a4a4a">Biometric Access Control</div>
<div class="t" style="left:541.20px;top:1118.97px;width:273.30px;overflow:hidden;font-size:19.3px;line-height:49.437000000000005px;color:#4a4a4a">Physical Access Security</div>
<div class="t" style="left:826.00px;top:1118.97px;width:181.60px;overflow:hidden;font-size:19.3px;line-height:49.437000000000005px;color:#4a4a4a">Building Entry</div>
<div class="t" style="left:1019.10px;top:1118.97px;width:210.30px;overflow:hidden;font-size:19.3px;line-height:49.437000000000005px;color:#4a4a4a">Security Manager</div>
<div class="t" style="left:1240.90px;top:1118.97px;width:191.60px;overflow:hidden;font-size:19.3px;line-height:49.437000000000005px;color:#4a4a4a">Security Team</div>
<div class="t" style="left:1443.8px;top:1130.18px;width:62px;height:25px;border-radius:12.5px;background:#b8f07a;text-align:center;font-size:15px;line-height:25.5px;color:#62607a">Active</div>
<div class="t" style="left:58.0px;top:1166.20px;width:49.400000000000006px;text-align:center;font-size:18px;line-height:49.837px;color:#4a4a4a">20</div>
<svg style="left:122px;top:1182.02px" width="16" height="17"><circle cx="7.6" cy="4.6" r="3.4" fill="#e8b70c"/><path d="M0.4 15.8 Q1 13.6 2.5 13.6 H12.7 Q14.2 13.6 14.8 15.8 Z" fill="#f1df7c"/><rect x="2" y="8" width="11.4" height="7.4" rx="1" fill="#9c9c9c"/><rect x="7" y="10.2" width="1.3" height="2.6" fill="#7c6f94"/></svg>
<div class="t" style="left:144.5px;top:1166.20px;font-size:15px;letter-spacing:0.15px;line-height:47.837px;color:#727094">Software</div>
<div class="t" style="left:283.00px;top:1166.20px;width:246.70px;overflow:hidden;font-size:19.3px;line-height:49.437000000000005px;color:#4a4a4a">Email Security Gateway</div>
<div class="t" style="left:541.20px;top:1166.20px;width:273.30px;overflow:hidden;font-size:19.3px;line-height:49.437000000000005px;color:#4a4a4a">Email Filtering and Threat Protection</div>
<div class="t" style="left:826.00px;top:1166.20px;width:181.60px;overflow:hidden;font-size:19.3px;line-height:49.437000000000005px;color:#4a4a4a">Data Center</div>
<div class="t" style="left:1019.10px;top:1166.20px;width:210.30px;overflow:hidden;font-size:19.3px;line-height:49.437000000000005px;color:#4a4a4a">IT Manager</div>
<div class="t" style="left:1240.90px;top:1166.20px;width:191.60px;overflow:hidden;font-size:19.3px;line-height:49.437000000000005px;color:#4a4a4a">IT Team</div>
<div class="t" style="left:1443.8px;top:1177.42px;width:62px;height:25px;border-radius:12.5px;background:#b8f07a;text-align:center;font-size:15px;line-height:25.5px;color:#62607a">Active</div>
<div class="a" style="left:0;top:1221.7px;width:1563px;height:16px;background:#f8f9fb"></div>
<div class="a" style="left:4px;top:1221.7px;width:1539.5px;height:15px;border-radius:4px;background:#d9d9d9"></div>
<div class="a" style="left:0;top:1237px;width:1563px;height:13px;background:linear-gradient(90deg,#efd9d6,#f4ddd4 40%,#f6dfd3);border-top:1px solid #cdbcb4"></div>
<div class="a" style="left:161px;top:1248.6px;width:255px;height:8px;border-radius:4px;background:#f9efec"></div>
<div class="a" style="left:672px;top:1244px;width:50px;height:12px;border-radius:5px;background:#f8ece6"></div>
<div class="a" style="left:700.6px;top:1246.3px;width:17px;height:17px;border-radius:50%;background:#7a929c"></div>
</div></body></html>
